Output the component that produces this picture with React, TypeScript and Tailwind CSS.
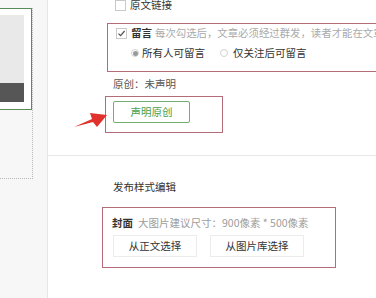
import React from 'react';

const font = { fontFamily: '"Noto Sans CJK SC", "Noto Sans", sans-serif' };

const Checkbox = ({ checked }: { checked?: boolean }) => (
  <span className="w-[11px] h-[11px] border border-[#c9c9c9] bg-white flex items-center justify-center shrink-0">
    {checked && (
      <svg width="9" height="9" viewBox="0 0 9 9">
        <path d="M1.5 4.6 L3.6 6.6 L7.6 2" fill="none" stroke="#555" strokeWidth="1.3" />
      </svg>
    )}
  </span>
);

const Radio = ({ on }: { on?: boolean }) => (
  <span className="w-[8px] h-[8px] rounded-full border border-[#d2d2d2] bg-white flex items-center justify-center shrink-0">
    {on && <span className="w-[5px] h-[5px] rounded-full bg-[#9a9a9a]" />}
  </span>
);

export default function App() {
  return (
    <div className="relative w-[376px] h-[298px] flex overflow-hidden bg-white text-[10.5px] leading-none text-[#333]" style={font}>
      {/* left preview column */}
      <div className="w-[48px] shrink-0 bg-[#f7f7f7] border-r border-[#e6e6e6] overflow-hidden">
        <div className="ml-[-10px] mt-[8px] w-[43px] h-[171px] border-r border-b border-dotted border-[#b9b9b9]">
          <div className="w-[42px] h-[102px] border-[1.5px] border-[#5b8a5b] bg-white pt-[6px] pr-[7px]">
            <div className="h-[68px] bg-[#e9e9ea]" />
            <div className="h-[19px] bg-[#565656]" />
          </div>
        </div>
      </div>

      {/* main column */}
      <div className="flex-1 flex flex-col bg-white">
        <div className="h-[156px] border-b border-[#e8e8e8] shrink-0">
          <div className="h-[12px] mt-[-1px] ml-[67px] flex items-center">
            <Checkbox />
            <span className="ml-[4px]">原文链接</span>
          </div>

          <div className="mt-[12px] ml-[59px] h-[49px] border border-r-0 border-[#b26d79] pl-[8px] flex flex-col gap-[2px] overflow-hidden">
            <div className="h-[18px] flex items-center whitespace-nowrap">
              <Checkbox checked />
              <span className="ml-[4px] font-bold text-[#333]">留言</span>
              <span className="ml-[3px] text-[10.4px] text-[#aaaaaa]">每次勾选后，文章必须经过群发，读者才能在文章中留言</span>
            </div>
            <div className="h-[18px] flex items-center pl-[15px] whitespace-nowrap">
              <Radio on />
              <span className="ml-[3px]">所有人可留言</span>
              <span className="ml-[15px]"><Radio /></span>
              <span className="ml-[5px]">仅关注后可留言</span>
            </div>
          </div>

          <div className="mt-[5px] ml-[65px] h-[14px] flex items-center text-[#555]">原创：未声明</div>

          <div className="mt-[5px] ml-[57px] w-[118px] h-[37px] border border-[#b26d79] pt-[4px] pl-[7px]">
            <div className="w-[77px] h-[22px] border border-[#72ad72] rounded-[2px] bg-white flex items-center justify-center text-[#49a049]">
              声明原创
            </div>
          </div>
        </div>

        <div className="flex-1">
          <div className="mt-[24px] ml-[65px] h-[14px] flex items-center">发布样式编辑</div>

          <div className="mt-[13px] ml-[54px] w-[234px] h-[61px] border border-[#b26d79] pt-[8px] pl-[9px]">
            <div className="h-[14px] flex items-center whitespace-nowrap">
              <span className="font-bold">封面</span>
              <span className="ml-[5px] text-[#9d9d9d]">大图片建议尺寸：900像素 * 500像素</span>
            </div>
            <div className="mt-[5px] ml-[1px] flex">
              <div className="w-[84px] h-[22px] border border-[#ececec] bg-white flex items-center justify-center">从正文选择</div>
              <div className="ml-[13px] w-[94px] h-[22px] border border-[#ececec] bg-white flex items-center justify-center">从图片库选择</div>
            </div>
          </div>
        </div>
      </div>

      {/* right gutter */}
      <div className="w-[4px] shrink-0 bg-[#f4f4f4]" />

      {/* annotation arrow */}
      <svg className="absolute left-[70px] top-[107px]" width="40" height="24" viewBox="0 0 40 24">
        <polygon points="4,20 22,12 20,6 37,8 27,20 23,15" fill="#e0312c" />
      </svg>
    </div>
  );
}
